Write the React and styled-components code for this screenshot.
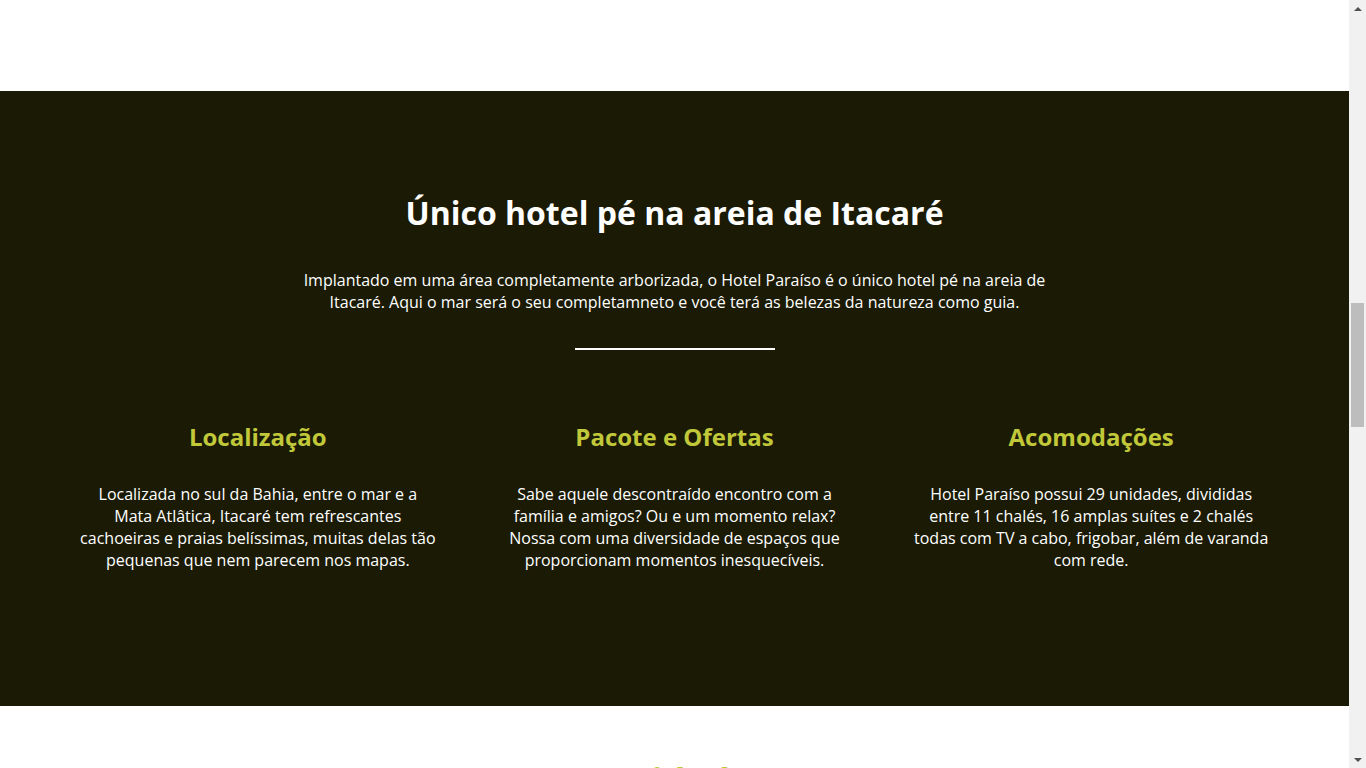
import styled, { createGlobalStyle } from "styled-components";

const GlobalStyle = createGlobalStyle`
  html, body {
    margin: 0;
    padding: 0;
    background: #fff;
    overflow: hidden;
  }
  body {
    font-family: "Open Sans", "Liberation Sans", sans-serif;
  }
  * {
    box-sizing: border-box;
  }
`;

const features = [
  {
    title: "Localização",
    text: "Localizada no sul da Bahia, entre o mar e a Mata Atlâtica, Itacaré tem refrescantes cachoeiras e praias belíssimas, muitas delas tão pequenas que nem parecem nos mapas.",
  },
  {
    title: "Pacote e Ofertas",
    text: "Sabe aquele descontraído encontro com a família e amigos? Ou e um momento relax? Nossa com uma diversidade de espaços que proporcionam momentos inesquecíveis.",
  },
  {
    title: "Acomodações",
    text: "Hotel Paraíso possui 29 unidades, divididas entre 11 chalés, 16 amplas suítes e 2 chalés todas com TV a cabo, frigobar, além de varanda com rede.",
  },
];

const App = () => {
  return (
    <>
      <GlobalStyle />
      <Page>
        <TopSpace />
        <About>
          <Title>Único hotel pé na areia de Itacaré</Title>
          <Lead>
            Implantado em uma área completamente arborizada, o Hotel Paraíso é
            o único hotel pé na areia de Itacaré. Aqui o mar será o seu
            completamneto e você terá as belezas da natureza como guia.
          </Lead>
          <Divider />
          <Features>
            {features.map((item) => (
              <Feature key={item.title}>
                <FeatureTitle>{item.title}</FeatureTitle>
                <FeatureText>{item.text}</FeatureText>
              </Feature>
            ))}
          </Features>
        </About>
        <News>
          <NewsTitle>Novidades</NewsTitle>
        </News>
      </Page>
      <ScrollBar>
        <Arrow $dir="up" />
        <Track>
          <Thumb />
        </Track>
        <Arrow $dir="down" />
      </ScrollBar>
    </>
  );
};

const Page = styled.div`
  margin-right: 17px;
  height: 768px;
  overflow: hidden;
`;

const TopSpace = styled.div`
  height: 91px;
  background: #fff;
`;

const About = styled.section`
  background: #1b1b05;
  padding: 100px 0 135px;
  display: flex;
  flex-direction: column;
  align-items: center;
  color: #fff;
`;

const Title = styled.h2`
  margin: 0;
  font-size: 32px;
  line-height: 44px;
  font-weight: 700;
  text-align: center;
`;

const Lead = styled.p`
  margin: 34px 0 0;
  max-width: 750px;
  font-size: 16px;
  line-height: 22px;
  text-align: center;
`;

const Divider = styled.hr`
  width: 200px;
  height: 2px;
  margin: 35px 0 0;
  border: none;
  background: #fff;
`;

const Features = styled.div`
  width: 1250px;
  margin-top: 70px;
  display: grid;
  grid-template-columns: repeat(3, 1fr);
`;

const Feature = styled.div`
  padding: 0 29px;
  text-align: center;
`;

const FeatureTitle = styled.h3`
  margin: 0;
  font-size: 24px;
  line-height: 33px;
  font-weight: 700;
  color: #c1c83a;
`;

const FeatureText = styled.p`
  margin: 30px 0 0;
  font-size: 16px;
  line-height: 22px;
`;

const News = styled.section`
  height: 200px;
  background: #fff;
  padding-top: 51px;
  text-align: center;
`;

const NewsTitle = styled.h2`
  margin: 0;
  font-size: 36px;
  line-height: 48px;
  font-weight: 700;
  color: #c1c83a;
`;

const ScrollBar = styled.div`
  position: fixed;
  top: 0;
  right: 0;
  width: 17px;
  height: 100vh;
  background: #f1f1f1;
  display: flex;
  flex-direction: column;
  align-items: center;
`;

const Arrow = styled.div`
  height: 17px;
  width: 17px;
  display: flex;
  align-items: center;
  justify-content: center;
  &::before {
    content: "";
    border-left: 4px solid transparent;
    border-right: 4px solid transparent;
    ${({ $dir }) =>
      $dir === "up"
        ? "border-bottom: 4px solid #505050;"
        : "border-top: 4px solid #505050;"}
  }
`;

const Track = styled.div`
  flex: 1;
  width: 100%;
  padding-top: 286px;
  display: flex;
  justify-content: center;
`;

const Thumb = styled.div`
  width: 13px;
  height: 124px;
  background: #bdbdbd;
`;

export default App;
